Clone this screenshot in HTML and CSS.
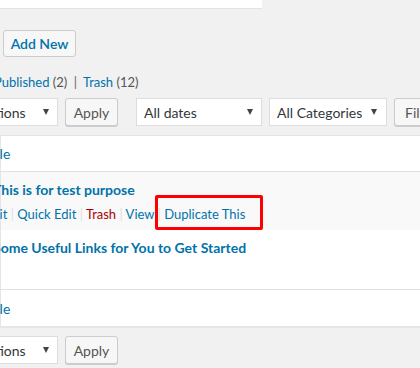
FILE: index.html
```html
<!DOCTYPE html>
<html lang="en">
<head>
    <meta charset="UTF-8">
    <title>Posts</title>
    <link rel="stylesheet" href="styles.css">
</head>
<body>
    <div class="notice"></div>

    <div class="heading">
        <a class="btn add-new" href="#">Add New</a>
    </div>

    <ul class="views">
        <li><a href="#">Published <span class="count">(2)</span></a> <span class="sep">|</span></li>
        <li><a href="#">Trash <span class="count">(12)</span></a></li>
    </ul>

    <div class="tablenav">
        <div class="select bulk"><span class="label">Bulk Actions</span><i class="arrow"></i></div>
        <button class="btn">Apply</button>
        <div class="select dates"><span class="label">All dates</span><i class="arrow"></i></div>
        <div class="select cats"><span class="label">All Categories</span><i class="arrow"></i></div>
        <button class="btn filter">Filter</button>
    </div>

    <table class="posts">
        <thead>
            <tr><th><a class="head-link" href="#">Title</a></th></tr>
        </thead>
        <tbody>
            <tr class="alt">
                <td>
                    <a class="row-title" href="#">This is for test purpose</a>
                    <div class="row-actions">
                        <a href="#">Edit</a> <span class="sep">|</span>
                        <a href="#">Quick Edit</a> <span class="sep">|</span>
                        <a class="trash" href="#">Trash</a> <span class="sep">|</span>
                        <a href="#">View</a> <span class="sep">|</span>
                        <a class="duplicate" href="#">Duplicate This</a>
                    </div>
                </td>
            </tr>
            <tr>
                <td>
                    <a class="row-title" href="#">Some Useful Links for You to Get Started</a>
                </td>
            </tr>
        </tbody>
        <tfoot>
            <tr><th><a class="head-link" href="#">Title</a></th></tr>
        </tfoot>
    </table>

    <div class="tablenav bottom">
        <div class="select bulk"><span class="label">Bulk Actions</span><i class="arrow"></i></div>
        <button class="btn">Apply</button>
    </div>
</body>
</html>
```

FILE: styles.css
```css
body {
    margin: 0;
    width: 420px;
    height: 368px;
    overflow: hidden;
    background-color: #f1f1f1;
    font-family: Lato, "Open Sans", sans-serif;
    font-size: 13px;
    color: #444;
}
a {
    color: #0073aa;
    text-decoration: none;
}
.notice {
    width: 262px;
    height: 8px;
    background: white;
    border-bottom: 1px solid #e2e2e2;
}
.heading {
    display: flex;
    padding: 21px 0 0 3px;
}
.btn {
    box-sizing: border-box;
    display: inline-flex;
    align-items: center;
    justify-content: center;
    height: 28px;
    padding: 0 10px;
    font-family: inherit;
    font-size: 14px;
    color: #555;
    background: #f7f7f7;
    border: 1px solid #ccc;
    border-radius: 3px;
    box-shadow: 0 1px 0 #ccc;
    white-space: nowrap;
}
.add-new {
    width: 73px;
    height: 27px;
    padding: 0;
    font-weight: 600;
    color: #0073aa;
    box-shadow: none;
}
.views {
    list-style: none;
    display: flex;
    margin: 16px 0 0 -6px;
    padding: 0;
    font-size: 13px;
    line-height: 18px;
    color: #666;
}
.views li {
    margin-right: 3px;
}
.views .sep {
    margin: 0 3px;
}
.count {
    color: #555;
}
.tablenav {
    display: flex;
    margin-top: 7px;
    height: 28px;
}
.tablenav > * {
    flex: none;
}
.tablenav .btn {
    width: 53px;
    margin-right: 18px;
}
.select {
    box-sizing: border-box;
    display: flex;
    align-items: center;
    height: 28px;
    padding: 0 8px 0 7px;
    background: white;
    border: 1px solid #ddd;
    font-size: 14px;
    color: #32373c;
    white-space: nowrap;
    margin-right: 7px;
}
.label {
    flex: 1;
}
.arrow {
    flex: none;
    width: 0;
    height: 0;
    border-left: 3px solid transparent;
    border-right: 3px solid transparent;
    border-top: 6px solid #444;
}
.bulk {
    width: 117px;
    margin-left: -59px;
}
.dates {
    width: 126px;
}
.cats {
    width: 118px;
    padding-right: 9px;
}
.tablenav .filter {
    width: 60px;
    margin-right: 0;
    justify-content: flex-start;
}
.posts {
    margin-top: 9px;
    width: 440px;
    border-collapse: collapse;
    background: white;
    border: 1px solid #e5e5e5;
    box-shadow: 0 1px 1px rgba(0, 0, 0, 0.04);
}
.posts th {
    height: 35px;
    padding: 0;
    text-align: left;
    font-weight: normal;
    font-size: 14px;
}
.posts thead th {
    border-bottom: 1px solid #e1e1e1;
}
.posts tfoot th {
    height: 36px;
    border-top: 1px solid #e1e1e1;
}
.head-link {
    margin-left: -18px;
}
.posts td {
    height: 44px;
    padding: 8px 0 7px;
    vertical-align: top;
}
.posts tr.alt td {
    height: 42px;
    background: #f9f9f9;
    padding-bottom: 6px;
}
.row-title {
    display: block;
    margin-left: -8px;
    font-size: 14px;
    font-weight: 700;
    line-height: 20px;
}
.row-actions {
    margin: 4px 0 0 -16px;
    line-height: 20px;
    color: #ddd;
}
.row-actions .trash {
    color: #a00;
}
.duplicate {
    position: relative;
}
.duplicate::after {
    content: "";
    position: absolute;
    left: -9px;
    right: -18px;
    top: -11px;
    bottom: -8px;
    border: 3px solid #f00;
    border-radius: 2px;
}
.tablenav.bottom {
    margin-top: 9px;
}
```
